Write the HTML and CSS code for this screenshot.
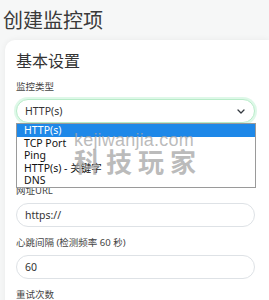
FILE: index.html
```html
<!DOCTYPE html>
<html lang="zh">
<head>
<meta charset="utf-8">
<link rel="stylesheet" href="styles.css">
</head>
<body>
<h1 class="page-title">创建监控项</h1>
<div class="card">
  <h2 class="section-title">基本设置</h2>
  <div class="field">
    <div class="label">监控类型</div>
    <div class="select-wrap">
      <div class="select">
        <span>HTTP(s)</span>
        <svg class="chevron" width="8" height="5" viewBox="0 0 8 5"><path d="M1 1 L4 4 L7 1" fill="none" stroke="#343a40" stroke-width="1.3" stroke-linecap="round" stroke-linejoin="round"/></svg>
      </div>
      <ul class="dropdown">
        <li class="option active">HTTP(s)</li>
        <li class="option">TCP Port</li>
        <li class="option">Ping</li>
        <li class="option">HTTP(s) - 关键字</li>
        <li class="option">DNS</li>
      </ul>
    </div>
  </div>
  <div class="field">
    <div class="label">显示名称</div>
    <div class="input"></div>
  </div>
  <div class="field">
    <div class="label">网址URL</div>
    <div class="input">https://</div>
  </div>
  <div class="field">
    <div class="label">心跳间隔 (检测频率 60 秒)</div>
    <div class="input">60</div>
  </div>
  <div class="field">
    <div class="label">重试次数</div>
    <div class="input">0</div>
  </div>
</div>
<div class="watermark">
  <div class="wm-url">kejiwanjia.com</div>
  <div class="wm-name">科技玩家</div>
</div>
</body>
</html>
```

FILE: styles.css
```css
html, body {
  margin: 0;
  padding: 0;
}
body {
  background: #f6f7f7;
  font-family: "Noto Sans", "Noto Sans CJK SC", sans-serif;
  color: #212529;
  overflow: hidden;
  height: 300px;
  position: relative;
}
.page-title {
  margin: 0;
  padding: 7px 0 0 3px;
  font-size: 20px;
  font-weight: 400;
  line-height: 25px;
  color: #3a3a3a;
  font-family: "Noto Sans CJK SC", sans-serif;
}
.card {
  margin: 8px 0 0 5px;
  background: #fff;
  border-radius: 10px 0 0 10px;
  box-shadow: 0 0 6px rgba(0,0,0,0.06);
  padding: 10px 14px 0 11px;
  height: 400px;
}
.section-title {
  margin: 0 0 10px;
  font-size: 16px;
  font-weight: 400;
  line-height: 20px;
  color: #333;
  font-family: "Noto Sans CJK SC", sans-serif;
}
.field {
  margin-bottom: 9px;
}
.label {
  font-size: 9.5px;
  line-height: 13px;
  color: #444;
  margin-bottom: 6px;
  font-family: "Noto Sans", "Noto Sans CJK SC", sans-serif;
}
.select-wrap {
  position: relative;
}
.select, .input {
  box-sizing: border-box;
  height: 24px;
  border: 1px solid #dee2e6;
  border-radius: 12px;
  background: #fff;
  padding: 0 8px;
  font-size: 10.5px;
  line-height: 22px;
  color: #333;
  display: flex;
  align-items: center;
}
.select {
  border-color: #b8ecc9;
  box-shadow: 0 0 0 2px rgba(92,221,139,0.2);
  justify-content: space-between;
  padding-right: 9px;
}
.chevron {
  display: block;
}
.dropdown {
  position: absolute;
  top: 100%;
  left: 0;
  width: 240px;
  box-sizing: border-box;
  margin: 0;
  padding: 0;
  list-style: none;
  background: #fff;
  border: 1px solid #9a9a9a;
  z-index: 2;
}
.option {
  height: 12.6px;
  line-height: 12.6px;
  padding-left: 7px;
  font-size: 10.5px;
  color: #111;
}
.option.active {
  background: #1e88e8;
  color: #fff;
}
.watermark {
  position: absolute;
  left: 74px;
  top: 131px;
  z-index: 3;
  color: rgba(165,165,165,0.75);
  pointer-events: none;
}
.wm-url {
  font-family: "Liberation Sans", sans-serif;
  font-size: 18px;
  line-height: 18px;
  letter-spacing: 0.2px;
}
.wm-name {
  font-family: "Noto Sans CJK SC", sans-serif;
  font-weight: 700;
  font-size: 26px;
  line-height: 24px;
  letter-spacing: 6px;
}
```
